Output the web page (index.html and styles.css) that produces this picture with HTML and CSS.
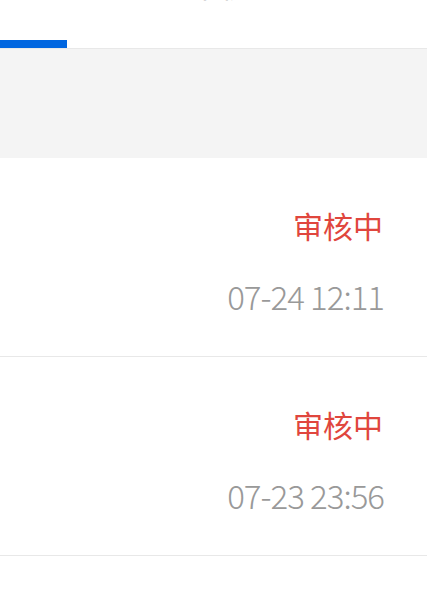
FILE: index.html
```html
<!DOCTYPE html>
<html>
  <head>
    <title>审核记录</title>
    <link rel="stylesheet" href="styles.css">
  </head>
  <body>
    <header class="tabs">
      <div class="tab active"><span class="tab-label">全部</span></div>
      <div class="tab"><span class="tab-label">审核记录</span></div>
    </header>
    <div class="spacer"></div>
    <main class="list">
      <div class="item">
        <div class="status">审核中</div>
        <div class="time">07-24 12:11</div>
      </div>
      <div class="item">
        <div class="status">审核中</div>
        <div class="time">07-23 23:56</div>
      </div>
    </main>
  </body>
</html>
```

FILE: styles.css
```css
body {
  margin: 0;
  font-family: "Noto Sans CJK SC", "Noto Sans", sans-serif;
  background-color: #fff;
}

.tabs {
  display: flex;
  height: 48px;
  border-bottom: 1px solid #e8e8e8;
  overflow: hidden;
}

.tab {
  display: flex;
  align-items: flex-end;
  height: 48px;
}

.tab.active {
  width: 67px;
  box-shadow: inset 0 -8px 0 #0066e0;
}

.tab.active .tab-label {
  visibility: hidden;
}

.tab-label {
  font-size: 30px;
  line-height: 30px;
  color: #666;
  margin-bottom: 49px;
}

.tab:nth-child(2) {
  padding-left: 123px;
}

.spacer {
  height: 109px;
  background-color: #f4f4f4;
}

.list {
  display: flex;
  flex-direction: column;
}

.item {
  height: 198px;
  border-bottom: 1px solid #e8e8e8;
  display: flex;
  flex-direction: column;
  align-items: flex-end;
  padding-right: 44px;
}

.status {
  margin-top: 47px;
  font-size: 30px;
  line-height: 40px;
  color: #e0463d;
}

.time {
  margin-top: 31px;
  font-size: 33px;
  font-weight: 300;
  line-height: 40px;
  letter-spacing: -1px;
  margin-right: -1px;
  color: #999;
}
```
